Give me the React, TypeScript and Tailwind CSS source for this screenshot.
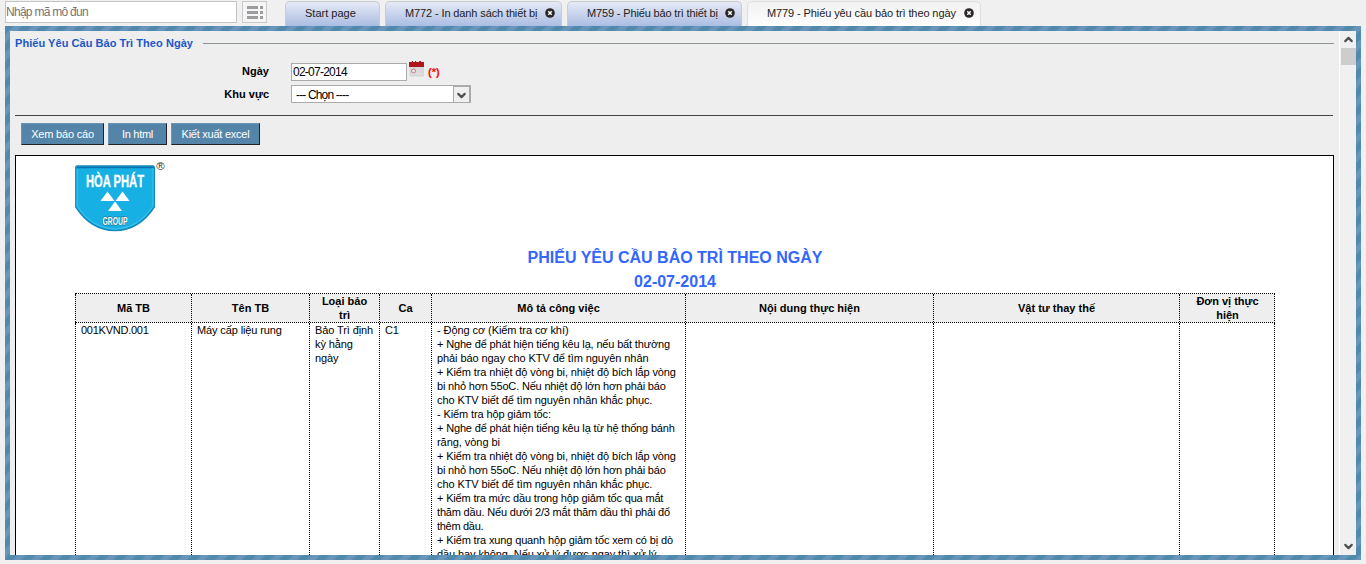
import React from 'react';
import { ChevronDown, ChevronUp } from 'lucide-react';

const TASKS = [
  { text: '- Động cơ (Kiểm tra cơ khí)', track: 'tracking-[-0.08px]' },
  { text: '+ Nghe để phát hiện tiếng kêu lạ, nếu bất thường', track: 'tracking-[-0.16px]' },
  { text: 'phải báo ngay cho KTV để tìm nguyên nhân', track: 'tracking-[-0.08px]' },
  { text: '+ Kiểm tra nhiệt độ vòng bi, nhiệt độ bích lắp vòng', track: 'tracking-[-0.12px]' },
  { text: 'bi nhỏ hơn 55oC. Nếu nhiệt độ lớn hơn phải báo', track: 'tracking-[-0.18px]' },
  { text: 'cho KTV biết để tìm nguyên nhân khắc phục.', track: 'tracking-[-0.1px]' },
  { text: '- Kiểm tra hộp giảm tốc:', track: 'tracking-[-0.12px]' },
  { text: '+ Nghe để phát hiện tiếng kêu lạ từ hệ thống bánh', track: 'tracking-[-0.16px]' },
  { text: 'răng, vòng bi', track: 'tracking-[-0.05px]' },
  { text: '+ Kiểm tra nhiệt độ vòng bi, nhiệt độ bích lắp vòng', track: 'tracking-[-0.12px]' },
  { text: 'bi nhỏ hơn 55oC. Nếu nhiệt độ lớn hơn phải báo', track: 'tracking-[-0.18px]' },
  { text: 'cho KTV biết để tìm nguyên nhân khắc phục.', track: 'tracking-[-0.1px]' },
  { text: '+ Kiểm tra mức dầu trong hộp giảm tốc qua mắt', track: 'tracking-[-0.17px]' },
  { text: 'thăm dầu. Nếu dưới 2/3 mắt thăm dầu thì phải đổ', track: 'tracking-[-0.18px]' },
  { text: 'thêm dầu.', track: 'tracking-[-0.3px]' },
  { text: '+ Kiểm tra xung quanh hộp giảm tốc xem có bị dò', track: 'tracking-[-0.14px]' },
  { text: 'dầu hay không. Nếu xử lý được ngay thì xử lý', track: 'tracking-[-0.1px]' },
];

const COLS = 'grid grid-cols-[116px_118px_70px_52px_254px_248px_246px_96px]';

function CloseIcon() {
  return (
    <svg width="10" height="10" viewBox="0 0 10 10" className="mb-px shrink-0">
      <circle cx="5" cy="5" r="4.8" fill="#2b2729" />
      <path d="M3.3 3.3l3.4 3.4M6.7 3.3L3.3 6.7" stroke="#fff" strokeWidth="1.5" />
    </svg>
  );
}

function Tab({ label, className, closable = true, active = false }: { label: string; className: string; closable?: boolean; active?: boolean }) {
  const skin = active
    ? 'border-[#dedede] bg-linear-to-b from-[#f2f2f2] to-[#fdfdfd]'
    : 'border-[#c9cbd3] bg-linear-to-b from-[#e6eaf5] to-[#abbde2]';
  return (
    <div className={`flex h-[25px] shrink-0 items-center rounded-t-[5px] border border-b-0 pb-[2px] ${skin} ${className}`}>
      <span>{label}</span>
      {closable && <CloseIcon />}
    </div>
  );
}

function Logo() {
  return (
    <svg width="92" height="74" viewBox="0 0 92 74" className="block overflow-visible">
      <path d="M.8 7.5Q.8 6 2.300 6H77.800Q79.300 6 79.300 7.500V47Q64 70.300 40 70.600Q16 70.300 .8 47Z" fill="#16b0e4" stroke="#1389bd" strokeWidth="1.400" />
      <path d="M2 7.500H78.500" stroke="#0872ad" strokeWidth="1.500" />
      <path d="M2.200 9V46.300Q17 68.800 40 69.100Q63 68.800 78 46.300V8" fill="none" stroke="#5bcdf0" strokeWidth=".7" />
      <g fill="#fff">
        <text x="11" y="26.800" fontFamily="Liberation Sans Narrow, Liberation Sans, sans-serif" fontSize="16" fontWeight="700" stroke="#fff" strokeWidth=".3" textLength="58" lengthAdjust="spacingAndGlyphs">HÒA PHÁT</text>
        <path d="M32.500 31.500L39.500 41H25.500ZM47.500 31.500L54.500 41H40.500ZM40 41.500L47 51H33Z" />
        <text x="27.500" y="64.500" fontFamily="Liberation Sans, sans-serif" fontSize="11" fontWeight="700" stroke="#17637f" strokeWidth="1" paintOrder="stroke" textLength="25" lengthAdjust="spacingAndGlyphs">GROUP</text>
      </g>
      <text x="81.300" y="10" fontFamily="Liberation Sans, sans-serif" fontSize="11.500" fill="#333">®</text>
    </svg>
  );
}

function CalendarIcon() {
  return (
    <svg width="16" height="16" viewBox="0 0 16 16" className="shrink-0">
      <rect x=".5" y="4" width="14.500" height="11.500" rx="1" fill="#d8d6d7" />
      <path d="M0 1H2V0H4V1H6V0H8V1H10V0H12V1H15V6H0Z" fill="#ad171c" />
      <path d="M2 0V1H3V0M7 0V1H8V0M12 0V1H13V0" fill="#f2c9ca" />
      <circle cx="4.500" cy="10" r="2" fill="#f5eaea" stroke="#bd7c80" />
      <path d="M8 7V14M11 7V14M2 13H14" stroke="#e2e2e2" />
    </svg>
  );
}

function ReportButton({ label, className }: { label: string; className: string }) {
  return (
    <button className={`flex h-[22px] items-center justify-center border border-t-[#6b94b5] border-r-[#222] border-b-[#222] border-l-[#6b94b5] bg-[#5485a9] text-white ${className}`}>
      {label}
    </button>
  );
}

function HeadCell({ children }: { children?: React.ReactNode }) {
  return (
    <div className="flex items-center justify-center border-l border-dotted border-black text-center leading-[14px]">
      <span className="-mt-px">{children}</span>
    </div>
  );
}

function Cell({ children, className = '' }: { children?: React.ReactNode; className?: string }) {
  return <div className={`border-l border-dotted border-black pl-[5px] leading-[14px] whitespace-nowrap ${className}`}>{children}</div>;
}

export default function App() {
  return (
    <div className="h-[564px] w-[1366px] overflow-hidden bg-[#f0f0f0] pl-[5px] font-['Liberation_Sans',Arial,sans-serif] text-[11px] text-black">
      <div className="flex h-[26px] items-start pt-px">
        <div className="flex h-[22px] w-[232px] items-center border border-[#c5c5c5] bg-white text-[12px] tracking-[-0.72px] text-[#757575]">Nhập mã mô đun</div>
        <div className="ml-[5px] flex h-[22px] w-[25px] items-center justify-center border border-[#c9c9c9] bg-[#f5f5f5]">
          <svg width="16" height="14" viewBox="0 0 16 14" fill="#9a9ca0">
            <path d="M0 1h11v3H0zM0 6h11v3H0zM0 11h11v3H0zM13 1h3v3h-3zM13 6h3v3h-3zM13 11h3v3h-3z" />
          </svg>
        </div>
        <div className="ml-[18px] flex text-[#222]">
          <Tab label="Start page" closable={false} className="w-[95px] pl-[19px]" />
          <Tab label="M772 - In danh sách thiết bị" className="ml-[5px] w-[177px] justify-between pr-[6px] pl-[19px] tracking-[-0.12px]" />
          <Tab label="M759 - Phiếu bảo trì thiết bị" className="ml-[5px] w-[175px] justify-between pr-[6px] pl-[19px] tracking-[-0.15px]" />
          <Tab label="M779 - Phiếu yêu cầu bảo trì theo ngày" active className="ml-[5px] w-[234px] justify-between pr-[6px] pl-[19px] tracking-[-0.1px]" />
        </div>
      </div>

      <div className="h-[534px] w-[1356px] bg-[repeating-linear-gradient(135deg,#5189ad_0px,#5189ad_5px,#6896bb_7px,#6896bb_11px,#5189ad_13px)] p-[5px]">
        <div className="flex h-[524px] w-[1346px] overflow-hidden bg-[#eeeeee]">
          <main className="h-[524px] w-[1329px] shrink-0 overflow-hidden pl-[5px]">
            <div className="flex h-[25px] w-[1319px] items-center">
              <h1 className="w-[188px] shrink-0 font-bold tracking-[0.05px] whitespace-nowrap text-[#1a57c8]">Phiếu Yêu Cầu Bảo Trì Theo Ngày</h1>
              <div className="h-px grow bg-[#8d9496]" />
            </div>
            <div className="flex h-[28px] items-start pt-[4px]">
              <label className="mt-[4px] w-[254px] text-right leading-[14px] font-bold">Ngày</label>
              <div className="mt-[3px] ml-[22px] flex h-[18px] w-[116px] items-center border border-[#ababab] bg-white pl-px text-[12px] tracking-[-0.75px]">02-07-2014</div>
              <div className="mt-px ml-[2px]"><CalendarIcon /></div>
              <span className="mt-[4px] ml-[3px] font-bold text-[#ff0000]">(*)</span>
            </div>
            <div className="flex h-[30px] items-start pt-px">
              <label className="mt-[2px] w-[254px] text-right leading-[14px] font-bold">Khu vực</label>
              <div className="ml-[22px] flex h-[18px] w-[180px] items-center justify-between border border-[#ababab] bg-white pl-[4px]">
                <span className="pt-px text-[12px] tracking-[-0.85px]">--- Chọn ----</span>
                <div className="flex h-[17px] w-[17px] items-center justify-center border border-[#aaa] bg-[#efefef]">
                  <ChevronDown size={13} strokeWidth={4} color="#505050" className="mt-[2px]" />
                </div>
              </div>
            </div>
            <div className="mt-px h-px w-[1318px] bg-[#444]" />
            <div className="flex h-[39px] items-start gap-[4px] pt-[7px] pl-[6px]">
              <ReportButton label="Xem báo cáo" className="w-[83px] tracking-[-0.2px]" />
              <ReportButton label="In html" className="w-[59px] tracking-[-0.3px]" />
              <ReportButton label="Kiết xuất excel" className="w-[89px] tracking-[-0.25px]" />
            </div>

            <section className="h-[401px] w-[1319px] border border-b-0 border-black bg-white pt-[4px] pl-[59px]">
              <Logo />
              <div className="-mb-px w-[1200px] pt-[12px] text-center text-[16px] leading-[24px] font-bold text-[#3366ff]">
                <div>PHIẾU YÊU CẦU BẢO TRÌ THEO NGÀY</div>
                <div>02-07-2014</div>
              </div>
              <div className={`${COLS} h-[30px] w-[1200px] border-y border-r border-dotted border-black bg-[#eeeeee] font-bold`}>
                <HeadCell>Mã TB</HeadCell>
                <HeadCell>Tên TB</HeadCell>
                <HeadCell>Loại bảo<br />trì</HeadCell>
                <HeadCell>Ca</HeadCell>
                <HeadCell>Mô tả công việc</HeadCell>
                <HeadCell>Nội dung thực hiện</HeadCell>
                <HeadCell>Vật tư thay thế</HeadCell>
                <HeadCell>Đơn vị thực<br />hiện</HeadCell>
              </div>
              <div className={`${COLS} h-[240px] w-[1200px] border-r border-dotted border-black`}>
                <Cell className="tracking-[-0.25px]">001KVND.001</Cell>
                <Cell className="tracking-[-0.12px]">Máy cấp liệu rung</Cell>
                <Cell className="tracking-[-0.1px]">Bảo Trì định<br />kỳ hằng<br />ngày</Cell>
                <Cell className="tracking-[-0.2px]">C1</Cell>
                <Cell>{TASKS.map((line, i) => <div key={i} className={line.track}>{line.text}</div>)}</Cell>
                <Cell />
                <Cell />
                <Cell />
              </div>
            </section>
          </main>
          <div className="flex h-[524px] w-[17px] flex-col items-center border-l border-white bg-[#f0f0f0]">
            <div className="flex h-[17px] items-center"><ChevronUp size={13} strokeWidth={4} color="#505050" /></div>
            <div className="h-[17px] w-[15px] bg-[#cdcdcd]" />
            <div className="grow" />
            <div className="flex h-[17px] items-center"><ChevronDown size={13} strokeWidth={4} color="#505050" /></div>
          </div>
        </div>
      </div>
    </div>
  );
}
